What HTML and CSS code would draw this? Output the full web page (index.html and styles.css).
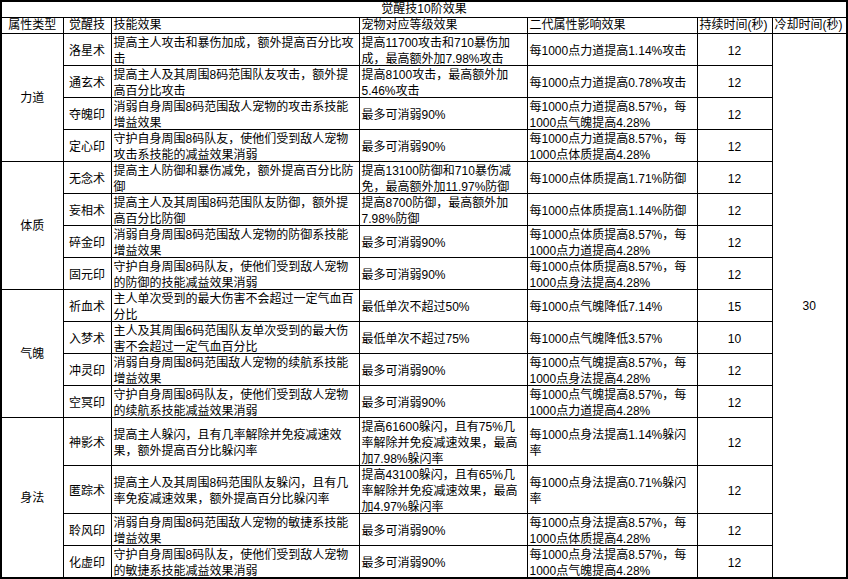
FILE: index.html
```html
<!DOCTYPE html>
<html lang="zh-CN">
<head>
<meta charset="utf-8">
<title>觉醒技10阶效果</title>
<link rel="stylesheet" href="styles.css">
</head>
<body>
<div class="frame">
<table class="sheet">
<colgroup>
<col class="w-type"><col class="w-skill"><col class="w-effect"><col class="w-pet"><col class="w-attr"><col class="w-dur"><col class="w-cd">
</colgroup>
<tbody>
<tr class="title-row"><td colspan="7"><div class="h ctr">觉醒技10阶效果</div></td></tr>
<tr class="head-row">
<td><div class="h ctr">属性类型</div></td>
<td><div class="h ctr">觉醒技</div></td>
<td><div class="h">技能效果</div></td>
<td><div class="h">宠物对应等级效果</div></td>
<td><div class="h">二代属性影响效果</div></td>
<td><div class="h">持续时间(秒)</div></td>
<td><div class="h">冷却时间(秒)</div></td>
</tr>

<tr>
<td rowspan="4" class="group">力道</td>
<td><div class="c ctr">洛星术</div></td>
<td><div class="c">提高主人攻击和暴伤加成，额外提高百分比攻<br>击</div></td>
<td><div class="c">提高11700攻击和710暴伤加<br>成，最高额外加7.98%攻击</div></td>
<td><div class="c">每1000点力道提高1.14%攻击</div></td>
<td><div class="c ctr">12</div></td>
<td rowspan="16" class="group">30</td>
</tr>
<tr>
<td><div class="c ctr">通玄术</div></td>
<td><div class="c">提高主人及其周围8码范围队友攻击，额外提<br>高百分比攻击</div></td>
<td><div class="c">提高8100攻击，最高额外加<br>5.46%攻击</div></td>
<td><div class="c">每1000点力道提高0.78%攻击</div></td>
<td><div class="c ctr">12</div></td>
</tr>
<tr>
<td><div class="c ctr">夺魄印</div></td>
<td><div class="c">消弱自身周围8码范围敌人宠物的攻击系技能<br>增益效果</div></td>
<td><div class="c">最多可消弱90%</div></td>
<td><div class="c">每1000点力道提高8.57%，每<br>1000点气魄提高4.28%</div></td>
<td><div class="c ctr">12</div></td>
</tr>
<tr>
<td><div class="c ctr">定心印</div></td>
<td><div class="c">守护自身周围8码队友，使他们受到敌人宠物<br>攻击系技能的减益效果消弱</div></td>
<td><div class="c">最多可消弱90%</div></td>
<td><div class="c">每1000点力道提高8.57%，每<br>1000点体质提高4.28%</div></td>
<td><div class="c ctr">12</div></td>
</tr>

<tr>
<td rowspan="4" class="group">体质</td>
<td><div class="c ctr">无念术</div></td>
<td><div class="c">提高主人防御和暴伤减免，额外提高百分比防<br>御</div></td>
<td><div class="c">提高13100防御和710暴伤减<br>免，最高额外加11.97%防御</div></td>
<td><div class="c">每1000点体质提高1.71%防御</div></td>
<td><div class="c ctr">12</div></td>
</tr>
<tr>
<td><div class="c ctr">妄相术</div></td>
<td><div class="c">提高主人及其周围8码范围队友防御，额外提<br>高百分比防御</div></td>
<td><div class="c">提高8700防御，最高额外加<br>7.98%防御</div></td>
<td><div class="c">每1000点体质提高1.14%防御</div></td>
<td><div class="c ctr">12</div></td>
</tr>
<tr>
<td><div class="c ctr">碎金印</div></td>
<td><div class="c">消弱自身周围8码范围敌人宠物的防御系技能<br>增益效果</div></td>
<td><div class="c">最多可消弱90%</div></td>
<td><div class="c">每1000点体质提高8.57%，每<br>1000点力道提高4.28%</div></td>
<td><div class="c ctr">12</div></td>
</tr>
<tr>
<td><div class="c ctr">固元印</div></td>
<td><div class="c">守护自身周围8码队友，使他们受到敌人宠物<br>的防御的技能减益效果消弱</div></td>
<td><div class="c">最多可消弱90%</div></td>
<td><div class="c">每1000点体质提高8.57%，每<br>1000点身法提高4.28%</div></td>
<td><div class="c ctr">12</div></td>
</tr>

<tr>
<td rowspan="4" class="group">气魄</td>
<td><div class="c ctr">祈血术</div></td>
<td><div class="c">主人单次受到的最大伤害不会超过一定气血百<br>分比</div></td>
<td><div class="c">最低单次不超过50%</div></td>
<td><div class="c">每1000点气魄降低7.14%</div></td>
<td><div class="c ctr">15</div></td>
</tr>
<tr>
<td><div class="c ctr">入梦术</div></td>
<td><div class="c">主人及其周围6码范围队友单次受到的最大伤<br>害不会超过一定气血百分比</div></td>
<td><div class="c">最低单次不超过75%</div></td>
<td><div class="c">每1000点气魄降低3.57%</div></td>
<td><div class="c ctr">10</div></td>
</tr>
<tr>
<td><div class="c ctr">冲灵印</div></td>
<td><div class="c">消弱自身周围8码范围敌人宠物的续航系技能<br>增益效果</div></td>
<td><div class="c">最多可消弱90%</div></td>
<td><div class="c">每1000点气魄提高8.57%，每<br>1000点身法提高4.28%</div></td>
<td><div class="c ctr">12</div></td>
</tr>
<tr>
<td><div class="c ctr">空冥印</div></td>
<td><div class="c">守护自身周围8码队友，使他们受到敌人宠物<br>的续航系技能减益效果消弱</div></td>
<td><div class="c">最多可消弱90%</div></td>
<td><div class="c">每1000点气魄提高8.57%，每<br>1000点力道提高4.28%</div></td>
<td><div class="c ctr">12</div></td>
</tr>

<tr class="tall">
<td rowspan="4" class="group">身法</td>
<td><div class="c ctr">神影术</div></td>
<td><div class="c">提高主人躲闪，且有几率解除并免疫减速效<br>果，额外提高百分比躲闪率</div></td>
<td><div class="c">提高61600躲闪，且有75%几<br>率解除并免疫减速效果，最高<br>加7.98%躲闪率</div></td>
<td><div class="c">每1000点身法提高1.14%躲闪<br>率</div></td>
<td><div class="c ctr">12</div></td>
</tr>
<tr class="tall">
<td><div class="c ctr">匿踪术</div></td>
<td><div class="c">提高主人及其周围8码范围队友躲闪，且有几<br>率免疫减速效果，额外提高百分比躲闪率</div></td>
<td><div class="c">提高43100躲闪，且有65%几<br>率解除并免疫减速效果，最高<br>加4.97%躲闪率</div></td>
<td><div class="c">每1000点身法提高0.71%躲闪<br>率</div></td>
<td><div class="c ctr">12</div></td>
</tr>
<tr>
<td><div class="c ctr">聆风印</div></td>
<td><div class="c">消弱自身周围8码范围敌人宠物的敏捷系技能<br>增益效果</div></td>
<td><div class="c">最多可消弱90%</div></td>
<td><div class="c">每1000点身法提高8.57%，每<br>1000点体质提高4.28%</div></td>
<td><div class="c ctr">12</div></td>
</tr>
<tr>
<td><div class="c ctr">化虚印</div></td>
<td><div class="c">守护自身周围8码队友，使他们受到敌人宠物<br>的敏捷系技能减益效果消弱</div></td>
<td><div class="c">最多可消弱90%</div></td>
<td><div class="c">每1000点身法提高8.57%，每<br>1000点气魄提高4.28%</div></td>
<td><div class="c ctr">12</div></td>
</tr>
</tbody>
</table>
</div>
</body>
</html>
```

FILE: styles.css
```css
html, body {
  margin: 0;
  padding: 0;
  background: #fff;
}

.frame {
  width: 844px;
  height: 575px;
  border: 2px solid #000;
  overflow: hidden;
  background: #fff;
}

.sheet {
  width: 844px;
  border-collapse: collapse;
  border-style: hidden;
  table-layout: fixed;
  font-family: "Liberation Sans", "Noto Sans CJK SC", sans-serif;
  font-size: 12px;
  line-height: 16px;
  color: #000;
}

.w-type { width: 61px; }
.w-skill { width: 48px; }
.w-effect { width: 248px; }
.w-pet { width: 168px; }
.w-attr { width: 170px; }
.w-dur { width: 75px; }
.w-cd { width: 74px; }

.sheet td {
  border: 1px solid #000;
  padding: 0;
  vertical-align: middle;
}

.h {
  height: 15px;
  display: flex;
  align-items: flex-end;
  padding: 0 2px;
  line-height: 15px;
  white-space: nowrap;
  overflow: hidden;
}

.c {
  box-sizing: border-box;
  height: 31px;
  display: flex;
  align-items: center;
  padding: 2px 2px 0;
  overflow: hidden;
  white-space: nowrap;
}

.tall .c {
  height: 47px;
}

.ctr {
  justify-content: center;
  text-align: center;
}

.group {
  text-align: center;
  padding-top: 2px;
}
```
